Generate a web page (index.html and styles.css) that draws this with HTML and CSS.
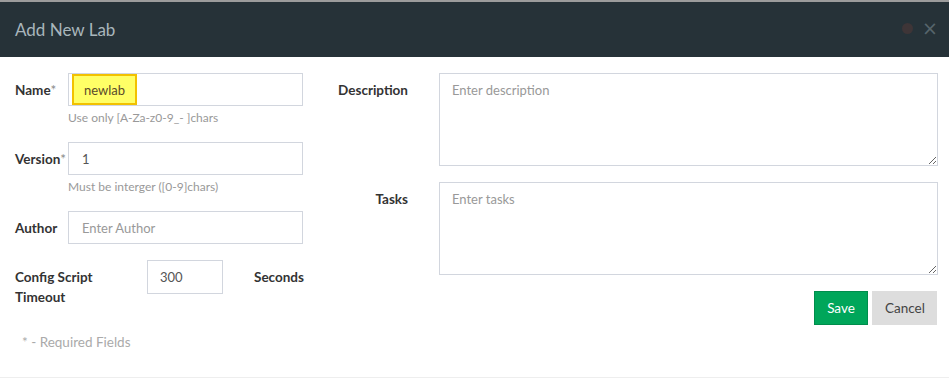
FILE: index.html
```html
<!DOCTYPE html>
<html>
<head>
<meta charset="utf-8">
<title>Add New Lab</title>
<link rel="stylesheet" href="styles.css">
</head>
<body>
<div class="backdrop-strip"></div>
<div class="modal">
  <div class="modal-header">
    <h4 class="modal-title">Add New Lab</h4>
    <div class="header-tools">
      <span class="dot"></span>
      <span class="close">&times;</span>
    </div>
  </div>
  <div class="modal-body">
    <div class="col-left">
      <div class="group">
        <label class="lbl">Name<span class="req">*</span></label>
        <div class="field">
          <div class="input"><span class="hl">newlab</span></div>
          <div class="help">Use only [A-Za-z0-9_- ]chars</div>
        </div>
      </div>
      <div class="group">
        <label class="lbl">Version<span class="req">*</span></label>
        <div class="field">
          <input class="input" type="text" value="1">
          <div class="help">Must be interger ([0-9]chars)</div>
        </div>
      </div>
      <div class="group">
        <label class="lbl">Author</label>
        <div class="field">
          <input class="input" type="text" placeholder="Enter Author">
        </div>
      </div>
      <div class="group group-timeout">
        <label class="lbl lbl-wide">Config Script Timeout</label>
        <input class="input input-small" type="text" value="300">
        <span class="lbl unit">Seconds</span>
      </div>
      <div class="required-note">* - Required Fields</div>
    </div>
    <div class="col-right">
      <div class="group">
        <label class="lbl lbl-right">Description</label>
        <textarea class="textarea" placeholder="Enter description"></textarea>
      </div>
      <div class="group">
        <label class="lbl lbl-right">Tasks</label>
        <textarea class="textarea" placeholder="Enter tasks"></textarea>
      </div>
      <div class="actions">
        <button class="btn btn-save">Save</button>
        <button class="btn btn-cancel">Cancel</button>
      </div>
    </div>
  </div>
  <div class="modal-footer"></div>
</div>
</body>
</html>
```

FILE: styles.css
```css
html, body {
  margin: 0;
  padding: 0;
  background: #ffffff;
  font-family: "Lato", "Open Sans", sans-serif;
  font-size: 13px;
  color: #333;
}

.backdrop-strip {
  height: 2px;
  background: #9c9c9c;
}

.modal {
  width: 949px;
  background: #fff;
}

.modal-header {
  height: 55px;
  background: #263238;
  display: flex;
  align-items: center;
  justify-content: space-between;
  padding: 0 11px 0 15px;
  box-sizing: border-box;
}

.modal-title {
  margin: 0;
  font-weight: 400;
  font-size: 17px;
  color: #a9b6bc;
}

.header-tools {
  display: flex;
  align-items: center;
  gap: 9px;
  margin-top: -2px;
}

.dot {
  width: 11px;
  height: 11px;
  border-radius: 50%;
  background: #3e3537;
}

.close {
  font-size: 19px;
  line-height: 1;
  color: #56656b;
  font-family: "DejaVu Sans", sans-serif;
}

.modal-body {
  display: flex;
  padding: 16px 11px 25px 15px;
}

.col-left {
  width: 288px;
  display: flex;
  flex-direction: column;
}

.col-right {
  width: 600px;
  margin-left: 35px;
  display: flex;
  flex-direction: column;
}

.group {
  display: flex;
  align-items: flex-start;
  margin-bottom: 16px;
}

.lbl {
  font-weight: 700;
  font-size: 13.5px;
  color: #333;
  line-height: 20px;
  padding-top: 7px;
  width: 53px;
  flex: none;
  white-space: nowrap;
}

.req {
  color: #888;
  font-weight: 400;
}

.field {
  display: flex;
  flex-direction: column;
  width: 235px;
}

.input {
  box-sizing: border-box;
  height: 33px;
  width: 235px;
  border: 1px solid #d2d6de;
  background: #fff;
  padding: 0 13px;
  font-family: inherit;
  font-size: 13px;
  color: #555;
  outline: none;
  margin: 0;
  display: flex;
  align-items: center;
}

.input::placeholder,
.textarea::placeholder {
  color: #999;
  opacity: 1;
}

div.input {
  padding: 0 0 0 3px;
}

.hl {
  box-sizing: border-box;
  height: 31px;
  display: flex;
  align-items: center;
  padding: 0 10px;
  background: #ffff66;
  border: 2px solid #f2c100;
  color: #5a4a2a;
}

.help {
  font-size: 12px;
  color: #999;
  line-height: 16px;
  margin-top: 4px;
}

.group-timeout .lbl-wide {
  width: 96px;
  margin-right: 36px;
  white-space: normal;
}

.input-small {
  width: 76px;
  height: 34px;
  padding: 0 12px;
}

.unit {
  width: auto;
  margin-left: 31px;
}

.required-note {
  margin-top: 9px;
  padding-left: 7px;
  color: #aaa;
  font-size: 13.5px;
  line-height: 20px;
}

.lbl-right {
  width: 70px;
  text-align: right;
  padding-top: 7px;
  margin-right: 31px;
}

.textarea {
  box-sizing: border-box;
  width: 499px;
  height: 93px;
  border: 1px solid #d2d6de;
  padding: 6px 12px;
  font-family: inherit;
  font-size: 13px;
  line-height: 20px;
  color: #555;
  margin: 0;
  outline: none;
}

.actions {
  display: flex;
  justify-content: flex-end;
  gap: 4px;
  margin-right: 1px;
}

.btn {
  height: 34px;
  border: 1px solid transparent;
  font-family: inherit;
  font-size: 13.5px;
  padding: 0 12px;
  margin: 0;
  border-radius: 0;
  cursor: pointer;
}

.btn-save {
  width: 54px;
  background: #00a65a;
  border-color: #008d4c;
  color: #fff;
}

.btn-cancel {
  width: 65px;
  background: #dddddd;
  border-color: #dddddd;
  color: #444;
}

.modal-footer {
  border-top: 1px solid #eee;
  height: 12px;
}
```
